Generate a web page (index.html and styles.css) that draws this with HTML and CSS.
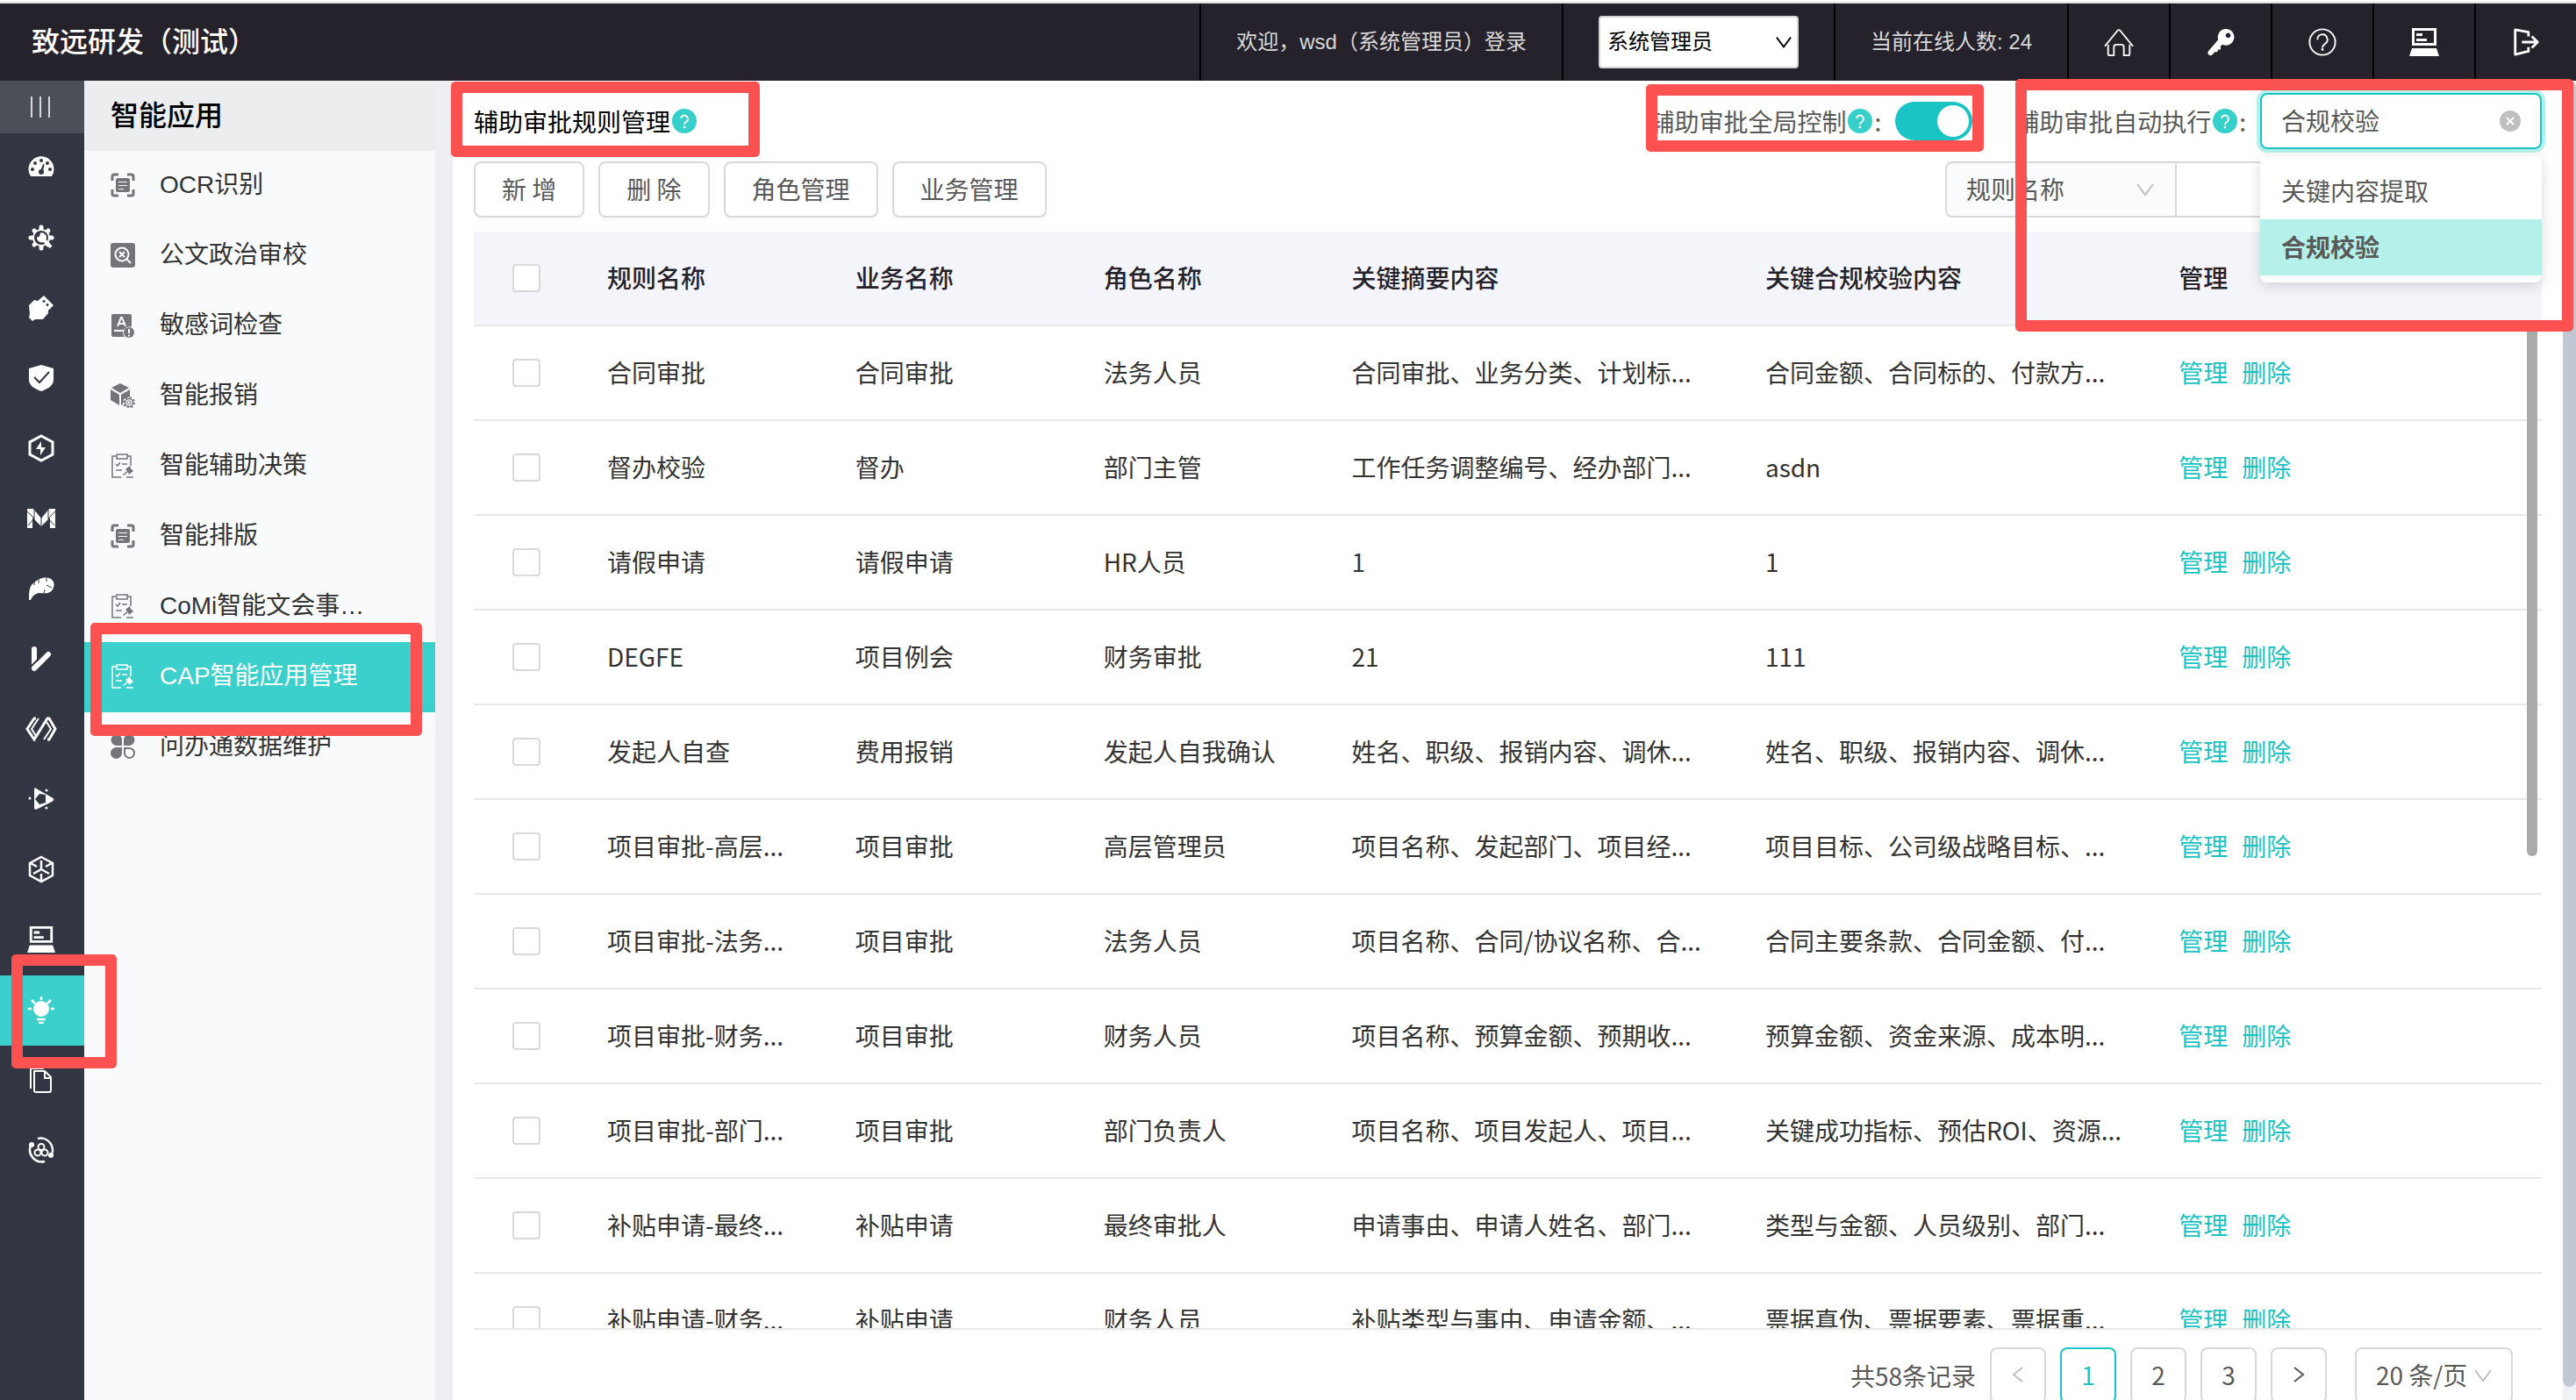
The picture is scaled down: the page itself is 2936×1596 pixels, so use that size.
FILE: index.html
```html
<!DOCTYPE html>
<html lang="zh-CN">
<head>
    <meta charset="UTF-8">
    <meta name="viewport" content="width=device-width, initial-scale=1.0">
    <title>辅助审批规则管理</title>
    <link rel="stylesheet" href="styles.css">
</head>
<body>
    <!-- shared icons -->
    <svg class="sprite" aria-hidden="true">
        <symbol id="i-computer" viewBox="0 0 34 34">
            <path d="M4.500 2.500h25v17h-25z" fill="none" stroke="currentColor" stroke-width="3"/>
            <path d="M8 7h7v3H8zM8 13h12v3H8z" fill="currentColor"/>
            <path d="M3 24h28l3 9H0z" fill="currentColor"/>
        </symbol>
        <symbol id="i-scan" viewBox="0 0 28 28">
            <path d="M2 9V4a2 2 0 0 1 2-2h5M19 2h5a2 2 0 0 1 2 2v5M26 19v5a2 2 0 0 1-2 2h-5M9 26H4a2 2 0 0 1-2-2v-5" fill="none" stroke="currentColor" stroke-width="3"/>
            <path fill-rule="evenodd" d="M8 6h12a2 2 0 0 1 2 2v12a2 2 0 0 1-2 2H8a2 2 0 0 1-2-2V8a2 2 0 0 1 2-2zM9 10v1h10v-1zM9 14v1h10v-1zM9 18v1h6v-1z" fill="currentColor"/>
        </symbol>
        <symbol id="i-clip" viewBox="0 0 28 28">
            <path d="M6 3H2v24h10M19 3h4v11M7 1h12v5H7zM6 12l2 2 3-4M13 12h6M6 19h7M18 27h8" fill="none" stroke="currentColor" stroke-width="1.500"/>
            <path d="M17 18l5-4 1 3 3 3-5 4-1-3-5 4-1-1 5-4z" fill="currentColor"/>
        </symbol>
        <symbol id="i-help" viewBox="0 0 28 28">
            <circle cx="14" cy="14" r="14" fill="#36cfc9"/>
            <path d="M10 11a4 4 0 1 1 6 4c-1.500 1-2 1.500-2 3" fill="none" stroke="#fff" stroke-width="2"/>
            <circle cx="14" cy="21" r="1.400" fill="#fff"/>
        </symbol>
        <symbol id="i-down" viewBox="0 0 20 20">
            <path d="M1 4l9 12 9-12" fill="none" stroke="currentColor" stroke-width="2"/>
        </symbol>
    </svg>

    <header class="topbar">
        <div class="brand">致远研发（测试）</div>
        <div class="top-cell">欢迎，wsd（系统管理员）登录</div>
        <div class="top-cell">
            <div class="select-box">
                <select class="role-select" aria-label="角色">
                    <option>系统管理员</option>
                </select>
                <svg class="arrow"><use href="#i-down"/></svg>
            </div>
        </div>
        <div class="top-cell">当前在线人数: 24</div>
        <a href="#" class="top-cell top-icon" aria-label="首页">
            <svg viewBox="0 0 36 36"><path d="M1 23L16.500 4a2 2 0 0 1 3 0L35 23M5 21v11a2 2 0 0 0 2 2h5V24a3 3 0 0 1 3-3h6a3 3 0 0 1 3 3v10h5a2 2 0 0 0 2-2V21" fill="none" stroke="currentColor" stroke-width="2"/></svg>
        </a>
        <a href="#" class="top-cell top-icon" aria-label="修改密码">
            <svg viewBox="0 0 36 36"><path fill-rule="evenodd" d="M24 2a10 10 0 1 1-4 19l-2 2v4h-3l-1 3h-3l-3 3c-3 3-7-1-5-4l12-14A10 10 0 0 1 24 2zm3 5a3 3 0 1 0 .1 0z" fill="currentColor"/></svg>
        </a>
        <a href="#" class="top-cell top-icon" aria-label="帮助">
            <svg viewBox="0 0 36 36"><circle cx="18" cy="18" r="15.500" fill="none" stroke="currentColor" stroke-width="2"/><path d="M12 15a6 6 0 1 1 9 5c-2 1.500-3 2.500-3 5" fill="none" stroke="currentColor" stroke-width="2"/><circle cx="18" cy="27" r="1.500" fill="currentColor"/></svg>
        </a>
        <a href="#" class="top-cell top-icon" aria-label="工作台">
            <svg viewBox="0 0 34 34"><use href="#i-computer"/></svg>
        </a>
        <a href="#" class="top-cell top-icon" aria-label="退出">
            <svg viewBox="0 0 36 36"><path d="M21 11V6L5 3v30l16-4v-5M13 18h19M25 11l7 7-7 7" fill="none" stroke="currentColor" stroke-width="3" stroke-linejoin="round"/></svg>
        </a>
    </header>

    <div class="layout">
        <nav class="rail">
            <button class="collapse" aria-label="收起菜单"><i></i><i></i><i></i></button>
            <a href="#" class="rail-item" aria-label="仪表盘">
                <svg viewBox="0 0 32 32"><path d="M4 26A14.500 14.500 0 1 1 28 26z" fill="currentColor"/><g fill="#323642"><circle cx="6" cy="18" r="2"/><circle cx="9" cy="11" r="2"/><circle cx="16" cy="8" r="2"/><circle cx="23" cy="11" r="2"/><circle cx="26" cy="18" r="2"/><circle cx="16" cy="21" r="3"/><path d="M15 20l3-8 1.500.5L18 21z"/></g></svg>
            </a>
            <a href="#" class="rail-item" aria-label="系统设置">
                <svg viewBox="0 0 32 32"><circle cx="16" cy="16" r="10" fill="currentColor"/><path d="M16 4v24M4 16h24M8 8l16 16M24 8L8 24" stroke="currentColor" stroke-width="5" stroke-linecap="round"/><circle cx="16" cy="16" r="8" fill="#323642"/><path d="M15 10.500l-1 4-3 1a5.500 5.500 0 0 0 7.500 5.500L26 28l2.500-2.500-7-7.500A5.500 5.500 0 0 0 15 10.500z" fill="currentColor"/></svg>
            </a>
            <a href="#" class="rail-item" aria-label="插件">
                <svg viewBox="0 0 32 32"><path fill-rule="evenodd" d="M19 2l11 11-6 6v3l-6 7h-9l-3 2-4-4 1-4-1-10 6-6 4 1zM19 7a1.500 1.500 0 1 0 .1 0zM23 11a1.500 1.500 0 1 0 .1 0z" fill="currentColor"/></svg>
            </a>
            <a href="#" class="rail-item" aria-label="安全">
                <svg viewBox="0 0 32 32"><path d="M16 1l14 4v13c0 7-8 11-14 13C10 29 2 25 2 18V5z" fill="currentColor"/><path d="M8 15l6 6L25 9" fill="none" stroke="#323642" stroke-width="2"/></svg>
            </a>
            <a href="#" class="rail-item" aria-label="性能">
                <svg viewBox="0 0 32 32"><path d="M16 2l13 7v14l-13 7-13-7V9z" fill="none" stroke="currentColor" stroke-width="3"/><path d="M16 8l-6 9h5v7l6-9h-5z" fill="currentColor"/></svg>
            </a>
            <a href="#" class="rail-item" aria-label="移动">
                <svg viewBox="0 0 32 32"><path d="M0 5h7l9 11 9-11h7v22h-6V15L16 25 6 15v12H0z" fill="currentColor"/><path d="M8 4v14M24 4v14M0 8l8 8-7 8M32 8l-8 8 7 8M16 14v12" fill="none" stroke="#323642" stroke-width="1"/></svg>
            </a>
            <a href="#" class="rail-item" aria-label="公文">
                <svg viewBox="0 0 32 32"><path d="M2 29c0-9 0-16 6-20C14 4 20 2 25 4c6 2 7 8 4 13-4 6-11 4-16 4-4 1-7 3-9 8z" fill="currentColor"/><path d="M8 7v5M13 5v5M22 3v5M28 15l-6-3M19 21l1-4" fill="none" stroke="#323642" stroke-width="1"/></svg>
            </a>
            <a href="#" class="rail-item" aria-label="流程">
                <svg viewBox="0 0 32 32"><path d="M8 5v20M24 11L8 27" fill="none" stroke="currentColor" stroke-width="6" stroke-linecap="round"/><path d="M4 25L13 16" stroke="#323642" stroke-width="2"/></svg>
            </a>
            <a href="#" class="rail-item" aria-label="开发">
                <svg class="wide" viewBox="0 0 38 32"><path d="M13 4h-2L3 16l8 12 15-24h2l7 12-7 12h-2" fill="none" stroke="currentColor" stroke-width="3"/><path d="M16 4L8 16l5 8M22 28l8-12-5-8" fill="none" stroke="currentColor" stroke-width="2"/></svg>
            </a>
            <a href="#" class="rail-item" aria-label="媒体">
                <svg viewBox="0 0 32 32"><path fill-rule="evenodd" d="M8 4c1-1 3 0 4 1l16 9c3 2 3 3 0 5l-16 8c-2 1-4 1-4-1zM9 16l5 6 7-2V11l-7-1z" fill="currentColor"/><circle cx="3" cy="15" r="1.500" fill="currentColor"/><circle cx="22" cy="6" r="1.500" fill="currentColor"/><circle cx="22" cy="26" r="1.500" fill="currentColor"/></svg>
            </a>
            <a href="#" class="rail-item" aria-label="应用">
                <svg viewBox="0 0 32 32"><path d="M16 2l13 7v14l-13 7-13-7V9zM16 6v10l-9 5M16 16l9 5M4 9l7 4M28 9l-7 4M16 30v-9" fill="none" stroke="currentColor" stroke-width="2.500"/></svg>
            </a>
            <a href="#" class="rail-item" aria-label="终端">
                <svg viewBox="0 0 34 34"><use href="#i-computer"/></svg>
            </a>
            <a href="#" class="rail-item active" aria-label="智能应用">
                <svg viewBox="0 0 32 32"><circle cx="16" cy="15" r="9" fill="currentColor"/><path d="M16 1v4M5 5l4 4M27 5l-4 4M1 15h4M27 15h4M11 27h10M13 31h6" stroke="currentColor" stroke-width="2.500"/></svg>
                <span class="mark mark-rail"></span>
            </a>
            <a href="#" class="rail-item" aria-label="文档">
                <svg viewBox="0 0 32 32"><path d="M8 6h12l7 7v15a2 2 0 0 1-2 2H10a2 2 0 0 1-2-2zM20 6v8h7M4 26V4a1 1 0 0 1 1-1h14" fill="none" stroke="currentColor" stroke-width="2"/></svg>
            </a>
            <a href="#" class="rail-item" aria-label="协同">
                <svg viewBox="0 0 32 32"><path d="M12 3a13.500 13.500 0 0 1 15 20M20 29A13.500 13.500 0 0 1 4 11" fill="none" stroke="currentColor" stroke-width="2.500"/><circle cx="5" cy="10" r="3" fill="currentColor"/><circle cx="27" cy="22" r="3" fill="currentColor"/><g fill="none" stroke="currentColor" stroke-width="2"><circle cx="16" cy="12.500" r="3.500"/><circle cx="12" cy="19" r="3.500"/><circle cx="20" cy="19" r="3.500"/></g></svg>
            </a>
        </nav>

        <aside class="submenu">
            <h2>智能应用</h2>
            <a href="#" class="menu-item"><svg><use href="#i-scan"/></svg>OCR识别</a>
            <a href="#" class="menu-item">
                <svg viewBox="0 0 28 28"><rect width="28" height="28" rx="3" fill="currentColor"/><circle cx="13" cy="13" r="7.500" fill="none" stroke="#fff" stroke-width="2"/><path d="M18 18l5 5M10 10l6 6M16 10l-6 6" stroke="#fff" stroke-width="2"/></svg>公文政治审校</a>
            <a href="#" class="menu-item">
                <svg viewBox="0 0 28 28"><path d="M3 1h19a2 2 0 0 1 2 2v13a7 7 0 0 0-8 11H3a2 2 0 0 1-2-2V3a2 2 0 0 1 2-2z" fill="currentColor"/><path d="M8 15l4-10h1l4 10M9.500 12h6M4 20h11" fill="none" stroke="#fff" stroke-width="2"/><circle cx="21" cy="22" r="6" fill="currentColor"/><path d="M21 18v5M21 24.500v2" stroke="#fff" stroke-width="2"/></svg>敏感词检查</a>
            <a href="#" class="menu-item">
                <svg viewBox="0 0 28 28"><path d="M11 0l10 5-10 6L1 5zM0 7l10 6v12L0 19zM12 13l10-6v8l-7 3-1 6-2 1z" fill="currentColor"/><circle cx="21" cy="22" r="4.500" fill="none" stroke="currentColor" stroke-width="1.500"/><circle cx="21" cy="22" r="6" fill="none" stroke="currentColor" stroke-width="2" stroke-dasharray="2 2.700"/><circle cx="21" cy="22" r="2" fill="none" stroke="currentColor" stroke-width="1"/></svg>智能报销</a>
            <a href="#" class="menu-item"><svg><use href="#i-clip"/></svg>智能辅助决策</a>
            <a href="#" class="menu-item"><svg><use href="#i-scan"/></svg>智能排版</a>
            <a href="#" class="menu-item"><svg><use href="#i-clip"/></svg>CoMi智能文会事…</a>
            <a href="#" class="menu-item active"><svg><use href="#i-clip"/></svg>CAP智能应用管理<span class="mark mark-menu"></span></a>
            <a href="#" class="menu-item">
                <svg viewBox="0 0 28 28"><path d="M7 0a6.500 6.500 0 0 1 6 7v6H7A6.500 6.500 0 0 1 7 0zM21 0a6.500 6.500 0 0 1 0 13h-6V7a6.500 6.500 0 0 1 6-7zM7 15h6v6a6.500 6.500 0 1 1-6-6z" fill="currentColor"/><path d="M16 16h5a5.500 5.500 0 1 1-5 5z" fill="none" stroke="currentColor" stroke-width="2"/></svg>问办通数据维护</a>
        </aside>

        <main class="main">
            <div class="bar">
                <h1 class="page-title">辅助审批规则管理<svg class="help"><use href="#i-help"/></svg><span class="mark mark-title"></span></h1>
                <div class="control global">
                    <label for="global-switch">辅助审批全局控制<svg class="help"><use href="#i-help"/></svg>:</label>
                    <input type="checkbox" id="global-switch" class="switch" checked>
                    <span class="mark mark-global"></span>
                </div>
                <div class="control">
                    <label for="auto-run">辅助审批自动执行<svg class="help"><use href="#i-help"/></svg>:</label>
                    <div class="picker">
                        <input type="text" id="auto-run" value="合规校验" readonly>
                        <button class="clear" aria-label="清除">
                            <svg viewBox="0 0 24 24"><circle cx="12" cy="12" r="12" fill="#bfbfbf"/><path d="M8 8l8 8M16 8l-8 8" stroke="#fff" stroke-width="2"/></svg>
                        </button>
                        <ul class="options">
                            <li>关键内容提取</li>
                            <li class="selected">合规校验</li>
                        </ul>
                    </div>
                    <span class="mark mark-auto"></span>
                </div>
            </div>

            <div class="bar tools">
                <button class="btn">新 增</button>
                <button class="btn">删 除</button>
                <button class="btn">角色管理</button>
                <button class="btn">业务管理</button>
                <div class="search">
                    <div class="select-box">
                        <select class="field-select" aria-label="搜索字段">
                            <option>规则名称</option>
                        </select>
                        <svg class="arrow"><use href="#i-down"/></svg>
                    </div>
                    <input type="text" class="search-input" aria-label="搜索内容">
                </div>
            </div>

            <div class="table-wrap">
                <table>
                    <thead>
                        <tr>
                            <th class="col-check"><input type="checkbox" aria-label="全选"></th>
                            <th class="col-name">规则名称</th>
                            <th class="col-name">业务名称</th>
                            <th class="col-name">角色名称</th>
                            <th class="col-text">关键摘要内容</th>
                            <th class="col-text">关键合规校验内容</th>
                            <th>管理</th>
                        </tr>
                    </thead>
                    <tbody>
                        <tr>
                            <td class="col-check"><input type="checkbox" aria-label="选择"></td>
                            <td>合同审批</td><td>合同审批</td><td>法务人员</td>
                            <td>合同审批、业务分类、计划标...</td><td>合同金额、合同标的、付款方...</td>
                            <td><a href="#">管理</a><a href="#">删除</a></td>
                        </tr>
                        <tr>
                            <td class="col-check"><input type="checkbox" aria-label="选择"></td>
                            <td>督办校验</td><td>督办</td><td>部门主管</td>
                            <td>工作任务调整编号、经办部门...</td><td>asdn</td>
                            <td><a href="#">管理</a><a href="#">删除</a></td>
                        </tr>
                        <tr>
                            <td class="col-check"><input type="checkbox" aria-label="选择"></td>
                            <td>请假申请</td><td>请假申请</td><td>HR人员</td>
                            <td>1</td><td>1</td>
                            <td><a href="#">管理</a><a href="#">删除</a></td>
                        </tr>
                        <tr>
                            <td class="col-check"><input type="checkbox" aria-label="选择"></td>
                            <td>DEGFE</td><td>项目例会</td><td>财务审批</td>
                            <td>21</td><td>111</td>
                            <td><a href="#">管理</a><a href="#">删除</a></td>
                        </tr>
                        <tr>
                            <td class="col-check"><input type="checkbox" aria-label="选择"></td>
                            <td>发起人自查</td><td>费用报销</td><td>发起人自我确认</td>
                            <td>姓名、职级、报销内容、调休...</td><td>姓名、职级、报销内容、调休...</td>
                            <td><a href="#">管理</a><a href="#">删除</a></td>
                        </tr>
                        <tr>
                            <td class="col-check"><input type="checkbox" aria-label="选择"></td>
                            <td>项目审批-高层...</td><td>项目审批</td><td>高层管理员</td>
                            <td>项目名称、发起部门、项目经...</td><td>项目目标、公司级战略目标、...</td>
                            <td><a href="#">管理</a><a href="#">删除</a></td>
                        </tr>
                        <tr>
                            <td class="col-check"><input type="checkbox" aria-label="选择"></td>
                            <td>项目审批-法务...</td><td>项目审批</td><td>法务人员</td>
                            <td>项目名称、合同/协议名称、合...</td><td>合同主要条款、合同金额、付...</td>
                            <td><a href="#">管理</a><a href="#">删除</a></td>
                        </tr>
                        <tr>
                            <td class="col-check"><input type="checkbox" aria-label="选择"></td>
                            <td>项目审批-财务...</td><td>项目审批</td><td>财务人员</td>
                            <td>项目名称、预算金额、预期收...</td><td>预算金额、资金来源、成本明...</td>
                            <td><a href="#">管理</a><a href="#">删除</a></td>
                        </tr>
                        <tr>
                            <td class="col-check"><input type="checkbox" aria-label="选择"></td>
                            <td>项目审批-部门...</td><td>项目审批</td><td>部门负责人</td>
                            <td>项目名称、项目发起人、项目...</td><td>关键成功指标、预估ROI、资源...</td>
                            <td><a href="#">管理</a><a href="#">删除</a></td>
                        </tr>
                        <tr>
                            <td class="col-check"><input type="checkbox" aria-label="选择"></td>
                            <td>补贴申请-最终...</td><td>补贴申请</td><td>最终审批人</td>
                            <td>申请事由、申请人姓名、部门...</td><td>类型与金额、人员级别、部门...</td>
                            <td><a href="#">管理</a><a href="#">删除</a></td>
                        </tr>
                        <tr>
                            <td class="col-check"><input type="checkbox" aria-label="选择"></td>
                            <td>补贴申请-财务...</td><td>补贴申请</td><td>财务人员</td>
                            <td>补贴类型与事由、申请金额、...</td><td>票据真伪、票据要素、票据重...</td>
                            <td><a href="#">管理</a><a href="#">删除</a></td>
                        </tr>
                    </tbody>
                </table>
                <div class="table-thumb"></div>
            </div>

            <div class="pagination">
                <span>共58条记录</span>
                <button class="page disabled" aria-label="上一页"><svg viewBox="0 0 20 20"><path d="M15 2L5 10l10 8" fill="none" stroke="currentColor" stroke-width="2"/></svg></button>
                <button class="page current">1</button>
                <button class="page">2</button>
                <button class="page">3</button>
                <button class="page" aria-label="下一页"><svg viewBox="0 0 20 20"><path d="M5 2l10 8-10 8" fill="none" stroke="currentColor" stroke-width="2"/></svg></button>
                <div class="select-box">
                    <select class="size-select" aria-label="每页条数">
                        <option>20 条/页</option>
                    </select>
                    <svg class="arrow"><use href="#i-down"/></svg>
                </div>
            </div>
        </main>

        <div class="scrollbar"><div class="scroll-thumb"></div></div>
    </div>
</body>
</html>
```

FILE: styles.css
```css
* {
    box-sizing: border-box;
}
body {
    margin: 0;
    height: 100vh;
    display: flex;
    flex-direction: column;
    overflow: hidden;
    font-family: "Noto Sans CJK SC", sans-serif;
    font-size: 28px;
    line-height: 40px;
    color: #595959;
    background-color: #fff;
}
a {
    color: inherit;
    text-decoration: none;
}
button, input, select {
    font: inherit;
    color: inherit;
    margin: 0;
}
button {
    cursor: pointer;
}
.sprite {
    position: absolute;
    width: 0;
    height: 0;
}

/* top bar */
.topbar {
    display: flex;
    flex: none;
    height: 90px;
    margin-top: 2px;
    border-top: 2px solid #e0e0e0;
    background-color: #25222c;
    color: #d9d9d9;
    font-family: "Liberation Sans", "Noto Sans CJK SC", sans-serif;
    font-size: 24px;
}
.brand {
    flex: 1;
    display: flex;
    align-items: center;
    padding-left: 36px;
    font-size: 32px;
    font-weight: 500;
    color: #fff;
}
.top-cell {
    display: flex;
    align-items: center;
    justify-content: center;
    padding: 0 40px;
    border-left: 2px solid #000;
}
.top-icon {
    width: 116px;
    padding: 0;
    color: #fff;
}
.top-icon svg {
    width: 36px;
    height: 34px;
}
.select-box {
    position: relative;
    display: flex;
}
.select-box select {
    appearance: none;
    outline: none;
}
.arrow {
    position: absolute;
    right: 24px;
    top: 50%;
    width: 20px;
    height: 20px;
    margin-top: -10px;
    color: #bfbfbf;
    pointer-events: none;
}
.role-select {
    width: 228px;
    height: 60px;
    padding: 0 8px;
    border: 2px solid #d4d4d4;
    border-radius: 4px;
    background-color: #fff;
    color: #000;
}
.topbar .arrow {
    right: 8px;
    width: 18px;
    color: #000;
}

.layout {
    flex: 1;
    min-height: 0;
    display: flex;
}

/* icon rail */
.rail {
    flex: none;
    width: 96px;
    background-color: #323642;
}
.collapse {
    display: flex;
    align-items: center;
    justify-content: center;
    gap: 8px;
    width: 100%;
    height: 60px;
    padding: 0 4px 0 0;
    border: none;
    background-color: #4b4f57;
}
.collapse i {
    width: 2px;
    height: 24px;
    background-color: #d9d9d9;
}
.rail-item {
    position: relative;
    display: flex;
    align-items: center;
    justify-content: center;
    height: 80px;
    padding: 0 2px 2px 0;
    color: #fff;
}
.rail-item svg {
    width: 32px;
    height: 32px;
}
.rail-item .wide {
    width: 38px;
}
.rail-item.active, .menu-item.active {
    background-color: #3bd0cb;
    color: #fff;
}

/* second level menu */
.submenu {
    flex: none;
    width: 400px;
    background-color: #f9fafc;
    font-family: "Liberation Sans", "Noto Sans CJK SC", sans-serif;
}
.submenu h2 {
    margin: 0;
    padding-left: 30px;
    line-height: 80px;
    font-size: 32px;
    font-weight: 500;
    color: #000;
    background-color: #ecedee;
}
.menu-item {
    position: relative;
    display: flex;
    align-items: center;
    gap: 28px;
    height: 80px;
    padding: 0 0 2px 30px;
    color: #333;
}
.menu-item svg {
    width: 28px;
    height: 28px;
    color: #73757b;
}
.menu-item.active svg {
    color: #fff;
}

/* content */
.main {
    flex: 1;
    min-width: 0;
    height: calc(100% + 14px);
    display: flex;
    flex-direction: column;
    padding: 14px 24px 10px;
    border-left: 20px solid #eeeff2;
}
.bar {
    flex: none;
    display: flex;
    align-items: center;
    height: 64px;
    margin-bottom: 14px;
}
.page-title {
    position: relative;
    display: flex;
    align-items: center;
    gap: 2px;
    height: 64px;
    margin: 0 auto 0 0;
    font-size: 28px;
    font-weight: 400;
    color: #000;
}
.help {
    width: 28px;
    height: 28px;
}
.control {
    position: relative;
    display: flex;
    align-items: center;
    gap: 16px;
    height: 64px;
}
.control label {
    display: flex;
    align-items: center;
    gap: 2px;
}
.global {
    margin-right: 48px;
}
.switch {
    appearance: none;
    width: 88px;
    height: 44px;
    padding: 4px;
    border-radius: 22px;
    background-color: #bfbfbf;
}
.switch::before {
    content: "";
    display: block;
    width: 36px;
    height: 36px;
    border-radius: 50%;
    background-color: #fff;
}
.switch:checked {
    background-color: #1bc4c4;
}
.switch:checked::before {
    margin-left: auto;
}
.picker {
    position: relative;
    z-index: 2;
    width: 321px;
}
.picker input {
    display: block;
    width: 100%;
    height: 64px;
    padding: 0 64px 2px 22px;
    border: 2px solid #1bc4c4;
    border-radius: 8px;
    outline: none;
    box-shadow: 0 0 0 4px #b5f1ea;
}
.clear {
    position: absolute;
    top: 20px;
    right: 24px;
    width: 24px;
    height: 24px;
    padding: 0;
    border: none;
    background: none;
}
.clear svg {
    display: block;
}
.options {
    position: absolute;
    top: 72px;
    left: 0;
    right: 0;
    margin: 0;
    padding: 8px 0;
    list-style: none;
    background-color: #fff;
    border-radius: 8px;
    box-shadow: 0 4px 16px rgba(0,0,0,0.15);
}
.options li {
    padding: 11px 24px 13px;
}
.options .selected {
    background-color: #b5f1ea;
    font-weight: 700;
}
.tools {
    gap: 16px;
    margin-bottom: 16px;
}
.btn {
    height: 64px;
    padding: 0 30px 2px;
    border: 2px solid #d9d9d9;
    border-radius: 8px;
    background-color: #fff;
    box-shadow: 0 4px 0 rgba(0,0,0,0.02);
}
.search {
    display: flex;
    margin-left: auto;
}
.field-select {
    width: 262px;
    height: 64px;
    padding: 0 22px 2px;
    border: 2px solid #d9d9d9;
    border-right: none;
    border-radius: 8px 0 0 8px;
    background-color: #fafbfc;
}
.search-input {
    width: 418px;
    height: 64px;
    padding: 0 22px;
    border: 2px solid #d9d9d9;
    border-radius: 0 8px 8px 0;
}

/* rules table */
.table-wrap {
    position: relative;
    flex: 1;
    min-height: 0;
    overflow: hidden;
    border-bottom: 2px solid #e8e8e8;
}
table {
    width: 100%;
    table-layout: fixed;
    border-collapse: separate;
    border-spacing: 0;
}
th, td {
    height: 108px;
    padding: 0 32px 2px;
    border-bottom: 2px solid #e8e8e8;
    text-align: left;
    white-space: nowrap;
    color: #333;
}
th {
    background-color: #f4f5fa;
    font-weight: 500;
    color: #25222c;
}
.col-check {
    width: 120px;
    padding: 0 0 0 44px;
}
.col-name {
    width: 12%;
}
.col-text {
    width: 20%;
}
td a {
    margin-right: 16px;
    color: #1bc4c4;
}
table input {
    appearance: none;
    display: block;
    width: 32px;
    height: 32px;
    border: 2px solid #d9d9d9;
    border-radius: 4px;
    background-color: #fff;
}
.table-thumb {
    position: absolute;
    top: 108px;
    right: 5px;
    width: 12px;
    height: 604px;
    border-radius: 6px;
    background-color: #a9abab;
}

/* pagination */
.pagination {
    flex: none;
    display: flex;
    align-items: center;
    justify-content: flex-end;
    gap: 16px;
    margin-top: 20px;
    padding-right: 33px;
}
.page {
    display: flex;
    align-items: center;
    justify-content: center;
    width: 64px;
    height: 64px;
    padding: 0 0 2px;
    border: 2px solid #d9d9d9;
    border-radius: 8px;
    background-color: #fff;
}
.page svg {
    width: 20px;
    height: 20px;
}
.page.current {
    border-color: #1bc4c4;
    color: #1bc4c4;
}
.page.disabled {
    color: #bfbfbf;
}
.pagination .select-box {
    margin-left: 16px;
}
.size-select {
    width: 180px;
    height: 64px;
    padding: 0 22px 2px;
    border: 2px solid #d9d9d9;
    border-radius: 8px;
    background-color: #fff;
}

/* page scrollbar */
.scrollbar {
    flex: none;
    width: 15px;
    background-color: #f1f2f6;
}
.scroll-thumb {
    height: 99%;
    border-radius: 8px;
    background-color: #c1c8d3;
}

/* red callout frames */
.mark {
    position: absolute;
    z-index: 5;
    border: 13px solid #fb5151;
    border-radius: 5px;
    pointer-events: none;
}
.mark-rail {
    top: -24px;
    left: 13px;
    width: 120px;
    height: 130px;
}
.mark-menu {
    top: -22px;
    left: 7px;
    width: 378px;
    height: 129px;
}
.mark-title {
    top: -13px;
    left: -26px;
    width: 352px;
    height: 86px;
}
.mark-global {
    top: -10px;
    left: -4px;
    width: 385px;
    height: 77px;
}
.mark-auto {
    top: -16px;
    left: 1px;
    right: -36px;
    height: 288px;
}
```
